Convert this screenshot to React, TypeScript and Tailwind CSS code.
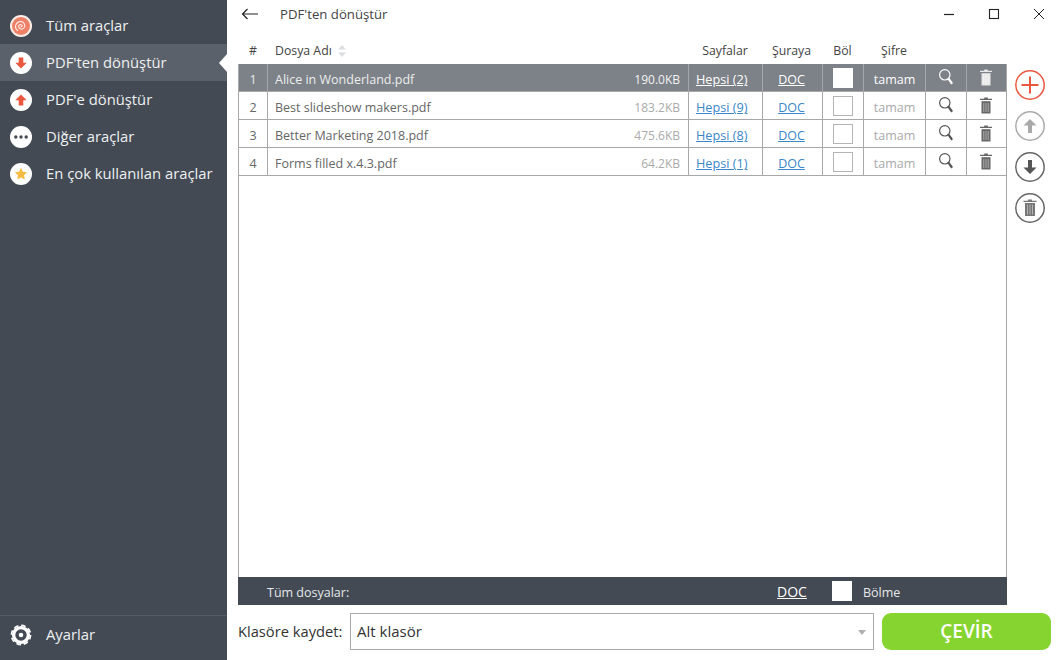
const FONT = "font-['Open_Sans','Noto_Sans',sans-serif]";

const FILES = [
  { id: 1, name: 'Alice in Wonderland.pdf', size: '190.0KB', pages: 'Hepsi (2)' },
  { id: 2, name: 'Best slideshow makers.pdf', size: '183.2KB', pages: 'Hepsi (9)' },
  { id: 3, name: 'Better Marketing 2018.pdf', size: '475.6KB', pages: 'Hepsi (8)' },
  { id: 4, name: 'Forms filled x.4.3.pdf', size: '64.2KB', pages: 'Hepsi (1)' },
];

const GRID = 'grid grid-cols-[28px_421px_74px_60px_41px_62px_41px_40px]';

function Badge({ children }: { children: React.ReactNode }) {
  return (
    <svg width="22" height="22" viewBox="0 0 22 22" className="shrink-0">
      <circle cx="11" cy="11" r="11" fill="#fff" />
      {children}
    </svg>
  );
}

function SpiralIcon() {
  return (
    <svg width="22" height="22" viewBox="0 0 22 22" className="shrink-0">
      <circle cx="11" cy="11" r="11" fill="#fdeee8" />
      <circle cx="11" cy="11" r="9" fill="#ef8068" />
      <path
        d="M11 11.600c1 .2 1.500-1 .7-1.700-1.200-1-3.100-.1-3.100 1.600 0 2.200 2.500 3.300 4.300 2.300 2.200-1.200 2.500-4.200.8-5.900-2.200-2.100-5.900-1.700-7.400 1-1.200 2.200-.6 5 1.300 6.600"
        fill="none"
        stroke="#fdeee8"
        strokeWidth="1.100"
        strokeLinecap="round"
      />
    </svg>
  );
}

function SearchIcon({ color }: { color: string }) {
  return (
    <svg width="16" height="18" viewBox="0 0 16 18">
      <circle cx="6.800" cy="6.800" r="5.200" fill="none" stroke={color} strokeWidth="1.200" />
      <path d="M10.600 10.800 13.600 15" stroke={color} strokeWidth="2.200" strokeLinecap="round" />
    </svg>
  );
}

function TrashIcon({ color }: { color: string }) {
  return (
    <svg width="14" height="17" viewBox="0 0 14 17">
      <path d="M5.200 0.500h3.600v1.200h4.200v1.400H1V1.700h4.200z" fill={color} />
      <path d="M2.500 4.200h9V16.500h-9z" fill={color} />
      <path d="M4.800 6v9M7 6v9M9.200 6v9" stroke="#fff" strokeWidth="0.900" opacity="0.55" />
    </svg>
  );
}

function SideButton({ color, children }: { color: string; children: React.ReactNode }) {
  return (
    <svg width="32" height="32" viewBox="0 0 32 32">
      <circle cx="16" cy="16" r="14.200" fill="none" stroke={color} strokeWidth="1.500" />
      {children}
    </svg>
  );
}

function NavItem({ label, active, icon }: { label: string; active?: boolean; icon: React.ReactNode }) {
  return (
    <div className={`flex h-[37px] items-center pl-[10px] ${active ? 'bg-[#5b616a]' : ''}`}>
      {icon}
      <span className="ml-[14px] text-[14.800px] text-[#eef0f2]">{label}</span>
      {active && (
        <span className="ml-auto h-0 w-0 border-y-[9px] border-r-[8px] border-y-transparent border-r-white" />
      )}
    </div>
  );
}

export default function App() {
  return (
    <div className={`${FONT} flex h-[660px] w-[1060px] overflow-hidden bg-white`}>
      <aside className="flex w-[227px] shrink-0 flex-col bg-[#434a54] pt-[7px]">
        <NavItem label="Tüm araçlar" icon={<SpiralIcon />} />
        <NavItem
          label="PDF'ten dönüştür"
          active
          icon={
            <Badge>
              <path d="M8.700 5.500h4.600v5.200h3.400L11 16.500l-5.700-5.800h3.400z" fill="#e9573f" />
            </Badge>
          }
        />
        <NavItem
          label="PDF'e dönüştür"
          icon={
            <Badge>
              <path d="M8.700 16.500h4.600v-5.200h3.400L11 5.500l-5.700 5.800h3.400z" fill="#e9573f" />
            </Badge>
          }
        />
        <NavItem
          label="Diğer araçlar"
          icon={
            <Badge>
              <circle cx="5.800" cy="11" r="1.700" fill="#434a54" />
              <circle cx="11" cy="11" r="1.700" fill="#434a54" />
              <circle cx="16.200" cy="11" r="1.700" fill="#434a54" />
            </Badge>
          }
        />
        <NavItem
          label="En çok kullanılan araçlar"
          icon={
            <Badge>
              <path
                d="M11 4.800l1.900 4 4.300.5-3.200 3 .9 4.300-3.900-2.200-3.900 2.200.9-4.300-3.200-3 4.300-.5z"
                fill="#f6bb42"
              />
            </Badge>
          }
        />
        <div className="mt-auto flex h-[45px] items-center border-t border-[#565c65] pb-[7px] pl-[10px]">
          <svg width="22" height="22" viewBox="0 0 22 22" className="shrink-0">
            <circle cx="11" cy="11" r="7.400" fill="none" stroke="#fff" strokeWidth="3.400" />
            <circle cx="11" cy="11" r="9.600" fill="none" stroke="#fff" strokeWidth="1.600" strokeDasharray="4.600 2.930" />
            <circle cx="11" cy="11" r="2.300" fill="#fff" />
          </svg>
          <span className="ml-[14px] text-[14.800px] text-[#eef0f2]">Ayarlar</span>
        </div>
      </aside>

      <main className="flex min-w-0 flex-1 flex-col pl-[11px]">
        <div className="flex h-[28px] items-center text-[#333]">
          <svg width="18" height="12" viewBox="0 0 18 12" className="ml-[3px]">
            <path d="M17 6H1.500M6.500 1 1.500 6l5 5" fill="none" stroke="#222" strokeWidth="1.200" />
          </svg>
          <span className="ml-[21px] pt-[1px] text-[13.200px] text-[#444]">PDF'ten dönüştür</span>
          <div className="ml-auto flex items-center">
            <svg width="12" height="12" viewBox="0 0 12 12" className="mr-[33px]">
              <path d="M1 6.500h10" stroke="#222" strokeWidth="1.200" />
            </svg>
            <svg width="12" height="12" viewBox="0 0 12 12" className="mr-[33px]">
              <rect x="1.500" y="1.500" width="9" height="9" fill="none" stroke="#222" strokeWidth="1.100" />
            </svg>
            <svg width="12" height="12" viewBox="0 0 12 12" className="mr-[15px]">
              <path d="M1 1l10 10M11 1 1 11" stroke="#222" strokeWidth="1" />
            </svg>
          </div>
        </div>

        <div className="flex">
          <div className="flex w-[769px] shrink-0 flex-col">
            <div className={`${GRID} h-[36px] items-end px-px pb-[4px] text-[12.300px] text-[#444]`}>
              <span className="text-center">#</span>
              <span className="flex items-center pl-[8px]">
                Dosya Adı
                <svg width="10" height="14" viewBox="0 0 10 14" className="ml-[5px]">
                  <path d="M5 1l4 4.500H1zM5 13 1 8.500h8z" fill="#dcdee0" />
                </svg>
              </span>
              <span className="text-center">Sayfalar</span>
              <span className="pr-[1px] text-center">Şuraya</span>
              <span className="text-center">Böl</span>
              <span className="text-center">Şifre</span>
              <span />
              <span />
            </div>

            <div className="flex h-[513px] flex-col border-x border-[#a8a8a8]">
              {FILES.map((f, i) => {
                const sel = i === 0;
                const line = sel ? 'border-[#a4a6aa]' : 'border-[#a8a8a8]';
                return (
                  <div
                    key={f.id}
                    className={`${GRID} h-[28px] border-b border-[#a8a8a8] text-[12.500px] ${sel ? 'bg-[#7d8188]' : 'bg-white'}`}
                  >
                    <span className={`flex items-center justify-center pt-[5px] ${sel ? 'text-[#e8e9ea]' : 'text-[#666]'}`}>{f.id}</span>
                    <span className={`flex items-center justify-between border-l pl-[7px] pr-[8px] pt-[5px] ${line}`}>
                      <span className={sel ? 'text-[#eceded]' : 'text-[#666]'}>{f.name}</span>
                      <span className={`text-[12px] ${sel ? 'text-[#f2f2f2]' : 'text-[#aaa]'}`}>{f.size}</span>
                    </span>
                    <span className={`flex items-center border-l pl-[7px] pt-[5px] text-[12.700px] underline ${line} ${sel ? 'text-white' : 'text-[#3b87c8]'}`}>{f.pages}</span>
                    <span className={`flex items-center justify-center border-l pr-[2px] pt-[5px] underline ${line} ${sel ? 'text-white' : 'text-[#3b87c8]'}`}>DOC</span>
                    <span className={`flex items-center justify-center border-l pr-[1px] ${line}`}>
                      <span className={`h-[20px] w-[20px] border ${sel ? 'border-white bg-white' : 'border-[#b5b5b5] bg-white'}`} />
                    </span>
                    <span className={`flex items-center justify-center border-l pt-[5px] ${line} ${sel ? 'text-white' : 'text-[#aaa]'}`}>tamam</span>
                    <span className={`flex items-center justify-center border-l pb-[1px] ${line}`}>
                      <SearchIcon color={sel ? '#fff' : '#555'} />
                    </span>
                    <span className={`flex items-center justify-center border-l pr-[2px] ${line}`}>
                      <TrashIcon color={sel ? '#e8e8e8' : '#666'} />
                    </span>
                  </div>
                );
              })}
            </div>

            <div className={`${GRID} h-[28px] bg-[#434a54] px-px text-[12px] text-[#e6e8ea]`}>
              <span />
              <span className="col-span-2 flex items-center pt-[5px] text-[12.500px]">Tüm dosyalar:</span>
              <span className="flex items-center justify-center pt-[1px] text-[14px] text-white underline">DOC</span>
              <span className="flex items-center justify-center pr-[2px]">
                <span className="h-[20px] w-[20px] bg-white" />
              </span>
              <span className="col-span-3 flex items-center pt-[5px] text-[12.500px]">Bölme</span>
            </div>
          </div>

          <div className="flex flex-col gap-[9px] pl-[7px] pt-[41px]">
            <SideButton color="#e9573f">
              <path d="M16 7.500v17M7.500 16h17" stroke="#e9573f" strokeWidth="2" />
            </SideButton>
            <SideButton color="#a9a9a9">
              <path d="M14 23v-7.500H9.500L16 9l6.500 6.500H18V23z" fill="#a9a9a9" />
            </SideButton>
            <SideButton color="#666">
              <path d="M14 9v7.500H9.500L16 23l6.500-6.500H18V9z" fill="#555" />
            </SideButton>
            <SideButton color="#666">
              <path d="M14 7.500h4v1.200h4.500V10h-13V8.700H14z" fill="#777" />
              <path d="M11 11h10v13H11z" fill="#777" />
              <path d="M13.500 12.500v10M16 12.500v10M18.500 12.500v10" stroke="#fff" strokeWidth="0.900" opacity="0.5" />
            </SideButton>
          </div>
        </div>

        <div className="mt-[8px] flex h-[37px] items-center">
          <span className="w-[112px] shrink-0 text-[14.700px] text-[#333]">Klasöre kaydet:</span>
          <div className="flex h-full w-[524px] shrink-0 items-center justify-between border border-[#a8a8a8] pl-[6px] pr-[7px] text-[15px] text-[#333]">
            Alt klasör
            <span className="mt-[2px] h-0 w-0 border-x-[4.500px] border-t-[5px] border-x-transparent border-t-[#b0b0b0]" />
          </div>
          <div className="ml-[8px] flex h-full w-[169px] items-center justify-center rounded-[9px] bg-[#86d42f] text-[19px] font-semibold text-white">
            ÇEVİR
          </div>
        </div>
      </main>
    </div>
  );
}
